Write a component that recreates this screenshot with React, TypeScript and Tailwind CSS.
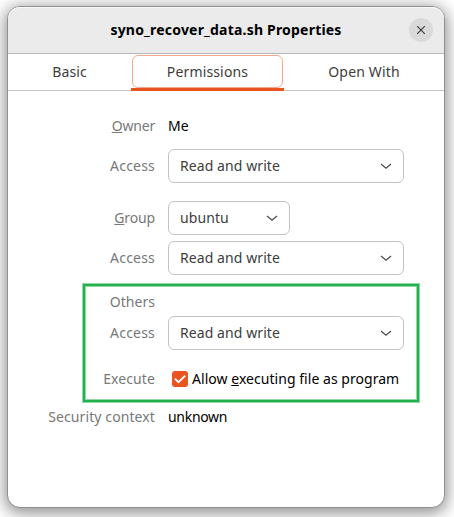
import React from 'react';

function Chevron() {
  return (
    <svg width="12" height="8" viewBox="0 0 12 8" fill="none" className="mr-[11px] shrink-0" aria-hidden="true">
      <path d="M1 2 6 6.2 11 2" stroke="#4a4a4a" strokeWidth="1.2" />
    </svg>
  );
}

function Select({ children, width }: { children: string; width: string }) {
  return (
    <button className={`flex h-[34px] items-center justify-between rounded-[6px] border border-[#c3c3c3] bg-white pl-[11px] text-[#3d3d3d] ${width}`}>
      <span className="whitespace-nowrap tracking-[0.08px]">{children}</span>
      <Chevron />
    </button>
  );
}

type RowProps = { label: React.ReactNode; height: string; tracking?: string; children?: React.ReactNode };

function Row({ label, height, tracking = 'tracking-[0.2px]', children }: RowProps) {
  return (
    <div className={`flex items-center ${height}`}>
      <div className={`mr-[13px] w-[147px] shrink-0 whitespace-nowrap text-right text-[#787878] ${tracking}`}>{label}</div>
      {children}
    </div>
  );
}

function U({ children }: { children: string }) {
  return <span className="underline decoration-1 underline-offset-1">{children}</span>;
}

export default function App() {
  return (
    <div className="h-[517px] w-[454px] overflow-hidden bg-white pl-[7px] pt-[6px] font-['Noto_Sans','Open_Sans',sans-serif] text-[14px] leading-5">
      <div className="h-[502px] w-[438px] rounded-[13px] border border-[#909090] bg-white shadow-[0_3px_16px_2px_rgba(0,0,0,0.45)]">
        <header className="relative flex h-[47px] items-center justify-center rounded-t-[12px] border-b border-[#b9b9b9] bg-[#ebebeb] shadow-[inset_0_1px_0_#f8f8f8]">
          <h1 className="whitespace-nowrap font-bold tracking-[0.2px] text-black">syno_recover_data.sh Properties</h1>
          <button className="absolute right-[11px] top-[11px] flex size-6 items-center justify-center rounded-full bg-[#dadada]" aria-label="Close">
            <svg width="10" height="10" viewBox="0 0 10 10" aria-hidden="true">
              <path d="m1.2 1.2 7.6 7.6m0-7.6L1.2 8.8" stroke="#3d3d3d" strokeWidth="1.2" />
            </svg>
          </button>
        </header>
        <nav className="flex h-[37px] border-b border-[#c3c3c3] text-[#3d3d3d]">
          <button className="w-[123px] pb-px text-center tracking-[0.1px]">Basic</button>
          <button className="-mb-px w-[153px] border-b-[3px] border-[#e95420] px-px pt-px">
            <span className="flex h-[33px] items-center justify-center rounded-[6px] border border-[#f3a88d] tracking-[0.15px]">
              Permissions
            </span>
          </button>
          <button className="w-[160px] pb-px text-center tracking-[0.15px]">Open With</button>
        </nav>
        <main className="pt-[25px]">
          <Row height="h-5" tracking="tracking-[-0.2px]" label={<><U>O</U>wner</>}><span className="text-black">Me</span></Row>
          <div className="mt-[13px]">
            <Row height="h-[34px]" label="Access"><Select width="w-[236px]">Read and write</Select></Row>
          </div>
          <div className="mt-[18px]">
            <Row height="h-[34px]" tracking="tracking-[-0.15px]" label={<><U>G</U>roup</>}><Select width="w-[122px]">ubuntu</Select></Row>
          </div>
          <div className="mt-[6px]">
            <Row height="h-[34px]" label="Access"><Select width="w-[236px]">Read and write</Select></Row>
          </div>
          <section className="ml-[75px] mt-[9px] h-[118px] w-[336px] border-2 border-[#22b14c] pt-[6px] shadow-[0_0_0_1px_#90d8a5,inset_0_0_0_1px_#90d8a5]">
            <div className="-ml-[77px]">
              <Row height="h-5" tracking="tracking-[0.05px]" label="Others" />
              <div className="mt-1">
                <Row height="h-[34px]" label="Access"><Select width="w-[236px]">Read and write</Select></Row>
              </div>
              <div className="mt-[19px]">
                <Row height="h-5" label="Execute" tracking="tracking-[0.1px]">
                  <span className="mx-1 flex size-4 shrink-0 items-center justify-center rounded-[3px] bg-[#e95420]">
                    <svg width="12" height="10" viewBox="0 0 12 10" fill="none" aria-hidden="true">
                      <path d="m0.8 4.6 3.7 3.5 6.7-6.5" stroke="white" strokeWidth="1.9" />
                    </svg>
                  </span>
                  <span className="whitespace-nowrap tracking-[0.04px] text-black">Allow <U>e</U>xecuting file as program</span>
                </Row>
              </div>
            </div>
          </section>
          <div className="mt-[5px]">
            <Row height="h-5" tracking="tracking-[0.1px]" label="Security context"><span className="tracking-[-0.3px] text-black">unknown</span></Row>
          </div>
        </main>
      </div>
    </div>
  );
}
